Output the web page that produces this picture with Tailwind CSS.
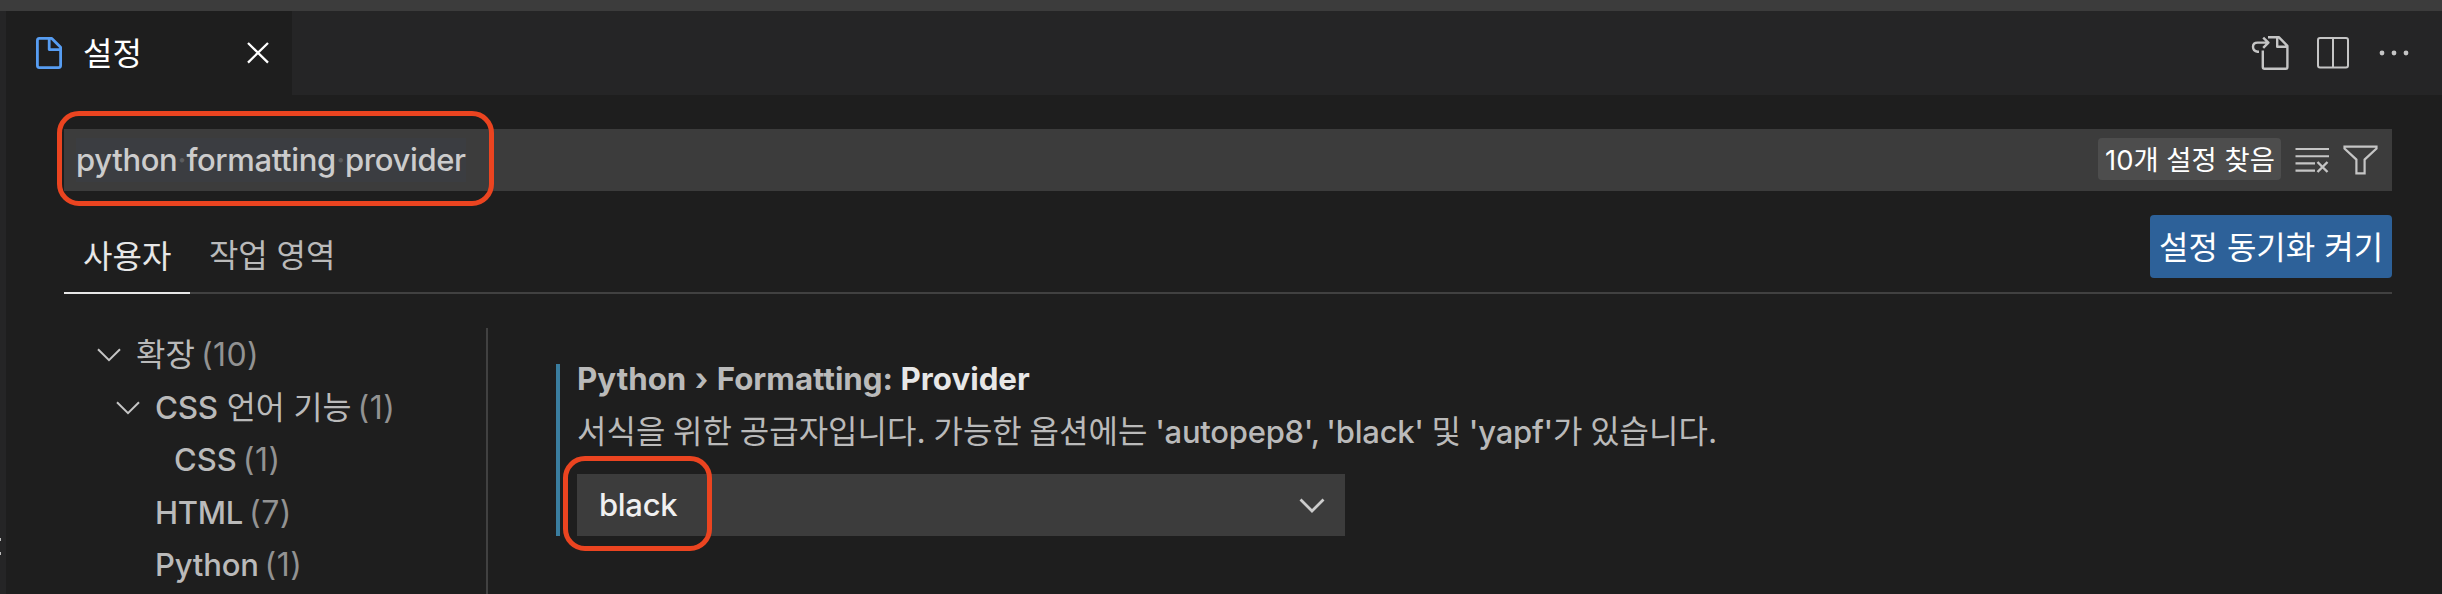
<!DOCTYPE html>
<html lang="ko">
<head>
<meta charset="utf-8">
<title>설정</title>
<script src="https://cdn.jsdelivr.net/npm/@tailwindcss/browser@4"></script>
</head>
<body class="relative h-[594px] w-[2442px] overflow-hidden bg-[#1e1e1e] font-[Inter,'Noto_Sans_CJK_KR',sans-serif] text-[32px] leading-[44px] whitespace-nowrap text-[#bababa]">
<div class="flex h-full flex-col">
  <div class="h-[11px] shrink-0 bg-[#3c3c3c]"></div>
  <div class="flex min-h-0 flex-1">
    <!-- edge of the side bar -->
    <aside class="flex w-[6px] shrink-0 flex-col gap-[11px] bg-[#252526] pt-[527px]">
      <i class="h-[3px] w-px bg-[#bbbbbb]"></i>
      <i class="h-[3px] w-px bg-[#bbbbbb]"></i>
    </aside>
    <main class="flex min-w-0 flex-1 flex-col">
      <!-- tab bar -->
      <header class="flex h-[84px] shrink-0 items-center justify-between bg-[#252526] pr-[33px]">
        <div class="flex h-full w-[286px] items-center bg-[#1e1e1e] pl-[29px]">
          <svg class="h-[34px] w-[28px]" viewBox="0 0 28 34" fill="none" stroke="#579df2" stroke-width="2.8" stroke-linejoin="round"><path d="M4.2 2.4H16.8L25.6 11.2V29.6Q25.6 31.6 23.6 31.6H4.2Q2.4 31.6 2.4 29.6V4.4Q2.4 2.4 4.2 2.4ZM14.2 2.4V13.6H25.6"/></svg>
          <span class="relative top-px ml-[20px] w-[164px] text-white">설정</span>
          <svg class="size-[22px]" viewBox="0 0 22 22" stroke="#fff" stroke-width="2.3"><path d="M1 1L21 20.6M21 1L1 20.6"/></svg>
        </div>
        <div class="flex items-center">
          <svg class="h-[36px] w-[40px]" viewBox="0 0 40 36" fill="none" stroke="#c5c5c5" stroke-width="2.4" stroke-linejoin="round"><path d="M18 2.2H28.8L37.4 10.8V32Q37.4 33.8 35.6 33.8H14.6Q12.8 33.8 12.8 32V15.4M27.2 2.2V11.8H37.4M9 16.8H7.6Q3 16 3 11.8Q3 7.6 7.6 7.6H18M13.2 2.6L18.4 7.6L13.2 12.8"/></svg>
          <svg class="ml-[27px] h-[32px] w-[32px]" viewBox="0 0 32 32" fill="none" stroke="#c5c5c5" stroke-width="2"><rect x="1" y="1" width="30" height="29.6" rx="2"/><path d="M16 1V31"/></svg>
          <svg class="ml-[30px] h-[6px] w-[30px]" viewBox="0 0 30 6" fill="#c5c5c5"><circle cx="3" cy="3" r="2.4"/><circle cx="15" cy="3" r="2.4"/><circle cx="27" cy="3" r="2.4"/></svg>
        </div>
      </header>

      <div class="flex min-h-0 flex-1 flex-col pt-[34px] pr-[50px] pl-[58px]">
        <!-- search box -->
        <div class="flex h-[62px] shrink-0 items-center bg-[#3c3c3c] pr-[14px] pl-[12px] text-[31px]">
          <span class="mr-auto bg-[#3b3d41] font-[450] tracking-[-0.36px] text-[#cccccc]">python<span class="text-[#5c5d60]">·</span>formatting<span class="text-[#5c5d60]">·</span>provider</span>
          <span class="relative -top-px flex h-[42px] w-[183px] items-center rounded-[4px] bg-[#4d4d4d] pt-px pl-[7px] text-[27.4px] text-white">10개 설정 찾음</span>
          <svg class="ml-[14px] h-[26px] w-[35px]" viewBox="0 0 35 26" fill="none" stroke="#c5c5c5" stroke-width="2.1"><path d="M0.5 2H34M0.5 9.2H34M0.5 16.4H20M0.5 23.6H20"/><path stroke-width="2.4" d="M22.5 15L32.5 25M32.5 15L22.5 25"/></svg>
          <svg class="ml-[13px] h-[30px] w-[35px]" viewBox="0 0 35 30" fill="none" stroke="#c5c5c5" stroke-width="2.2"><path d="M1.5 1.6H33.5V3.6L21.6 14.6V28.4H13.4V14.6L1.5 3.6Z"/></svg>
        </div>

        <!-- scope tabs -->
        <div class="mt-[24px] flex h-[79px] shrink-0 items-start border-b-[2px] border-[#414141]">
          <div class="h-[79px] w-[126px] border-b-[2px] border-[#e7e7e7] pt-[20px] pl-[19px] text-[#e7e7e7]">사용자</div>
          <div class="pt-[19px] pl-[19px] tracking-[-0.1px]">작업 영역</div>
          <button class="ml-auto h-[63px] w-[242px] rounded-[4px] bg-[#2d6199] pt-[3px] pl-[9px] text-left text-white">설정 동기화 켜기</button>
        </div>

        <div class="flex min-h-0 flex-1 pt-[34px]">
          <!-- table of contents -->
          <nav class="flex w-[424px] shrink-0 flex-col border-r-[2px] border-[#414141] pt-px text-[31px] leading-[52.5px]">
            <div class="flex h-[52.5px] shrink-0 items-center gap-[6px] pl-[33px]">
              <svg class="mr-[9px] h-[14px] w-[24px]" viewBox="0 0 24 14" fill="none" stroke="#c5c5c5" stroke-width="2"><path d="M1 1.2L12 12.2L23 1.2"/></svg>
              <span class="text-[32px]">확장</span><span class="text-[32px] tracking-[0.4px] text-[#929292]">(10)</span>
            </div>
            <div class="flex h-[52.5px] shrink-0 items-center gap-[6px] pl-[52px]">
              <svg class="mr-[9px] h-[14px] w-[24px]" viewBox="0 0 24 14" fill="none" stroke="#c5c5c5" stroke-width="2"><path d="M1 1.2L12 12.2L23 1.2"/></svg>
              <span class="text-[31.5px]"><span class="font-[450] tracking-[-0.3px]">CSS</span> 언어 기능</span><span class="text-[32px] tracking-[0.5px] text-[#929292]">(1)</span>
            </div>
            <div class="flex h-[52.5px] shrink-0 items-center gap-[6px] pl-[110px]"><span class="font-[450]">CSS</span><span class="text-[32px] tracking-[0.5px] text-[#929292]">(1)</span></div>
            <div class="flex h-[52.5px] shrink-0 items-center gap-[6px] pl-[91px]"><span class="font-[450] tracking-[-0.3px]">HTML</span><span class="text-[32px] tracking-[0.5px] text-[#929292]">(7)</span></div>
            <div class="flex h-[52.5px] shrink-0 items-center gap-[6px] pl-[91px]"><span class="font-[450] tracking-[-0.2px]">Python</span><span class="text-[32px] tracking-[0.5px] text-[#929292]">(1)</span></div>
          </nav>

          <!-- setting -->
          <section class="mt-[36px] ml-[68px] h-[172px] border-l-[4px] border-[#3a7d9f] pl-[17px]">
            <h2 class="-mt-[7px] text-[31.3px] font-bold">Python <span class="mx-px">›</span> Formatting: <span class="text-[#e7e7e7]">Provider</span></h2>
            <p class="mt-[9px] [word-spacing:-1.2px]">서식을 위한 공급자입니다. 가능한 옵션에는 <span class="text-[31px] font-[450] tracking-[-0.25px]">'autopep8', 'black'</span> 및 <span class="text-[31px] font-[450] tracking-[-0.25px]">'yapf'</span>가 있습니다.</p>
            <div class="mt-[20px] flex h-[62px] w-[768px] items-center justify-between bg-[#3c3c3c] pr-[20px] pl-[22px] text-[31px] text-[#f0f0f0]">
              <span class="font-[450] tracking-[-0.3px]">black</span>
              <svg class="h-[15px] w-[26px]" viewBox="0 0 26 15" fill="none" stroke="#cccccc" stroke-width="2.8"><path d="M1.5 1.5L13 13L24.5 1.5"/></svg>
            </div>
          </section>
        </div>
      </div>
    </main>
  </div>
</div>

<!-- callouts -->
<div class="absolute top-[111px] left-[57px] h-[95px] w-[437px] rounded-[22px] border-[5px] border-[#eb4420]"></div>
<div class="absolute top-[456px] left-[563px] h-[95px] w-[149px] rounded-[22px] border-[5px] border-[#eb4420]"></div>
</body>
</html>
